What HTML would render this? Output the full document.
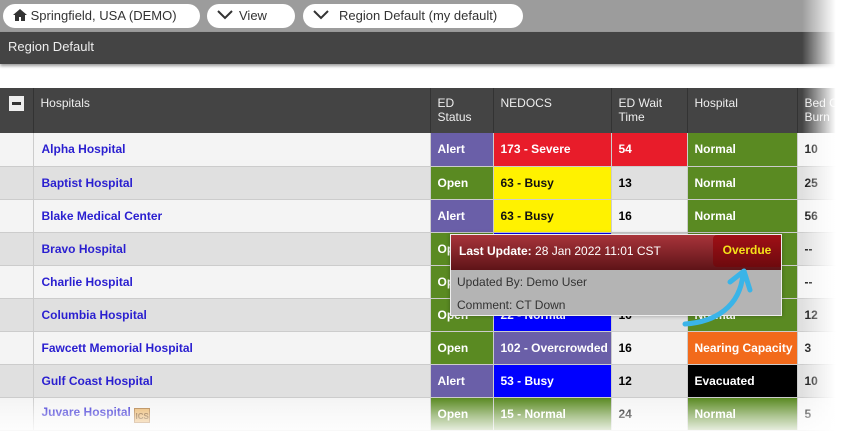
<!DOCTYPE html>
<html><head><meta charset="utf-8"><style>
*{box-sizing:border-box;margin:0;padding:0}
html,body{width:847px;height:443px;overflow:hidden}
body{background:#fff;font-family:"Liberation Sans",Arial,sans-serif;position:relative}
.top{position:absolute;left:0;top:0;width:847px;height:32px;background:#9c9c9c}
.pill{position:absolute;top:4px;height:24px;background:#fff;border-radius:12px;font-size:13px;color:#333;line-height:24px;padding-left:10px;white-space:nowrap}
.bar{position:absolute;left:0;top:32px;width:847px;height:32px;background:#444;color:#eee;font-size:13px;line-height:30px;padding-left:8px;box-shadow:0 2px 3px rgba(0,0,0,.4)}
table{position:absolute;left:0;top:88px;width:857px;border-collapse:collapse;font-size:12px;table-layout:fixed}
th{background:#444;color:#eee;font-weight:normal;text-align:left;vertical-align:top;padding:8px 7px;height:45px;border-right:1px solid #333;line-height:14px;white-space:nowrap;overflow:hidden}
td{height:33px;border-bottom:1px solid #ccc;border-right:1px solid #ccc;padding:0 7px;font-weight:bold;white-space:nowrap;overflow:hidden}
tr.a td{background:#f4f4f4} tr.b td{background:#e0e0e0}
td.n{color:#2a1fd0;padding-left:8px}
td.al{background:#6a5fa8!important;color:#fff}
td.op{background:#5a8a22!important;color:#fff}
td.rd{background:#e81c2a!important;color:#fff}
td.ye{background:#fff200!important;color:#111}
td.bl{background:#0000ff!important;color:#fff}
td.pu{background:#6a5fa8!important;color:#fff}
td.gr{background:#5a8a22!important;color:#fff}
td.or{background:#f26a1b!important;color:#fff}
td.bk{background:#000!important;color:#fff}
.fr{position:absolute;top:0;right:0;width:45px;height:443px;background:linear-gradient(to right,rgba(255,255,255,0),#fff 75%)}
.fb{position:absolute;left:0;top:398px;width:847px;height:45px;background:linear-gradient(to bottom,rgba(255,255,255,0),rgba(255,255,255,.5) 40%,#fff 85%)}
.tip{position:absolute;left:450px;top:234px;width:332px;height:82px;border:1px solid #eee;background:#b4b4b4;box-shadow:0 0 4px rgba(0,0,0,.3)}
.th{height:35px;background:linear-gradient(#a8343a,#5e1418);color:#fff;font-size:12px;line-height:33px;padding-left:8px;position:relative}
.od{position:absolute;right:0;top:0;width:68px;height:32px;background:linear-gradient(#a01016,#6e0a0e);color:#f5e21a;font-weight:bold;font-size:12px;text-align:center;line-height:30px;border-radius:4px 0 0 4px}
.tb{font-size:12px;color:#333;padding-left:6px;line-height:23px}
</style></head><body>
<div class="top">
<div class="pill" style="left:3px;width:197px"><svg width="14" height="12" viewBox="0 0 14 12" style="vertical-align:-1px"><path d="M7 0L0 6h2v6h4V8h2v4h4V6h2z" fill="#333"/></svg> Springfield, USA (DEMO)</div>
<div class="pill" style="left:207px;width:88px"><svg width="16" height="10" viewBox="0 0 16 10" style="margin-right:6px"><path d="M1 1l7 7 7-7" stroke="#333" stroke-width="2" fill="none"/></svg>View</div>
<div class="pill" style="left:303px;width:220px"><svg width="16" height="10" viewBox="0 0 16 10" style="margin-right:10px"><path d="M1 1l7 7 7-7" stroke="#333" stroke-width="2" fill="none"/></svg>Region Default (my default)</div>
</div>
<div class="bar">Region Default</div>
<table>
<colgroup><col style="width:33px"><col style="width:397px"><col style="width:63px"><col style="width:118px"><col style="width:76px"><col style="width:110px"><col style="width:60px"></colgroup>
<tr><th><div style="width:15px;height:15px;background:#eee;margin-left:2px;position:relative"><div style="position:absolute;left:3px;top:6px;width:9px;height:3px;background:#333"></div></div></th><th>Hospitals</th><th>ED<br>Status</th><th>NEDOCS</th><th>ED Wait<br>Time</th><th>Hospital</th><th>Bed C<br>Burn</th></tr>
<tr class="a"><td></td><td class="n">Alpha Hospital</td><td class="al">Alert</td><td class="rd">173 - Severe</td><td class="rd">54</td><td class="gr">Normal</td><td>10</td></tr>
<tr class="b"><td></td><td class="n">Baptist Hospital</td><td class="op">Open</td><td class="ye">63 - Busy</td><td>13</td><td class="gr">Normal</td><td>25</td></tr>
<tr class="a"><td></td><td class="n">Blake Medical Center</td><td class="al">Alert</td><td class="ye">63 - Busy</td><td>16</td><td class="gr">Normal</td><td>56</td></tr>
<tr class="b"><td></td><td class="n">Bravo Hospital</td><td class="op">Open</td><td class="bl">22 - Normal</td><td>16</td><td class="gr">Normal</td><td>--</td></tr>
<tr class="a"><td></td><td class="n">Charlie Hospital</td><td class="op">Open</td><td class="bl">22 - Normal</td><td>16</td><td class="gr">Normal</td><td>--</td></tr>
<tr class="b"><td></td><td class="n">Columbia Hospital</td><td class="op">Open</td><td class="bl">22 - Normal</td><td>16</td><td class="gr">Normal</td><td>12</td></tr>
<tr class="a"><td></td><td class="n">Fawcett Memorial Hospital</td><td class="op">Open</td><td class="pu">102 - Overcrowded</td><td>16</td><td class="or">Nearing Capacity</td><td>3</td></tr>
<tr class="b"><td></td><td class="n">Gulf Coast Hospital</td><td class="al">Alert</td><td class="bl">53 - Busy</td><td>12</td><td class="bk">Evacuated</td><td>10</td></tr>
<tr class="a"><td></td><td class="n">Juvare Hospital <span style="display:inline-block;width:16px;height:15px;background:#e8b060;color:#7a4a10;font-size:8px;line-height:15px;text-align:center;vertical-align:-3px;border:1px solid #a87030">ICS</span></td><td class="op">Open</td><td class="gr">15 - Normal</td><td>24</td><td class="gr">Normal</td><td>5</td></tr>
</table>
<div class="tip"><div class="th"><b>Last Update:</b> 28 Jan 2022 11:01 CST<div class="od">Overdue</div></div>
<div class="tb" style="margin-top:1px">Updated By: Demo User</div><div class="tb">Comment: CT Down</div></div>
<svg style="position:absolute;left:680px;top:262px" width="80" height="70" viewBox="0 0 80 70"><path d="M5 62C35 60 60 45 63 12" stroke="#3ab4e8" stroke-width="5" fill="none" stroke-linecap="round"/><path d="M50 20L64 9 70 28" stroke="#3ab4e8" stroke-width="5" fill="none" stroke-linecap="round" stroke-linejoin="round"/></svg>
<div class="fr"></div><div class="fb"></div>
</body></html>
